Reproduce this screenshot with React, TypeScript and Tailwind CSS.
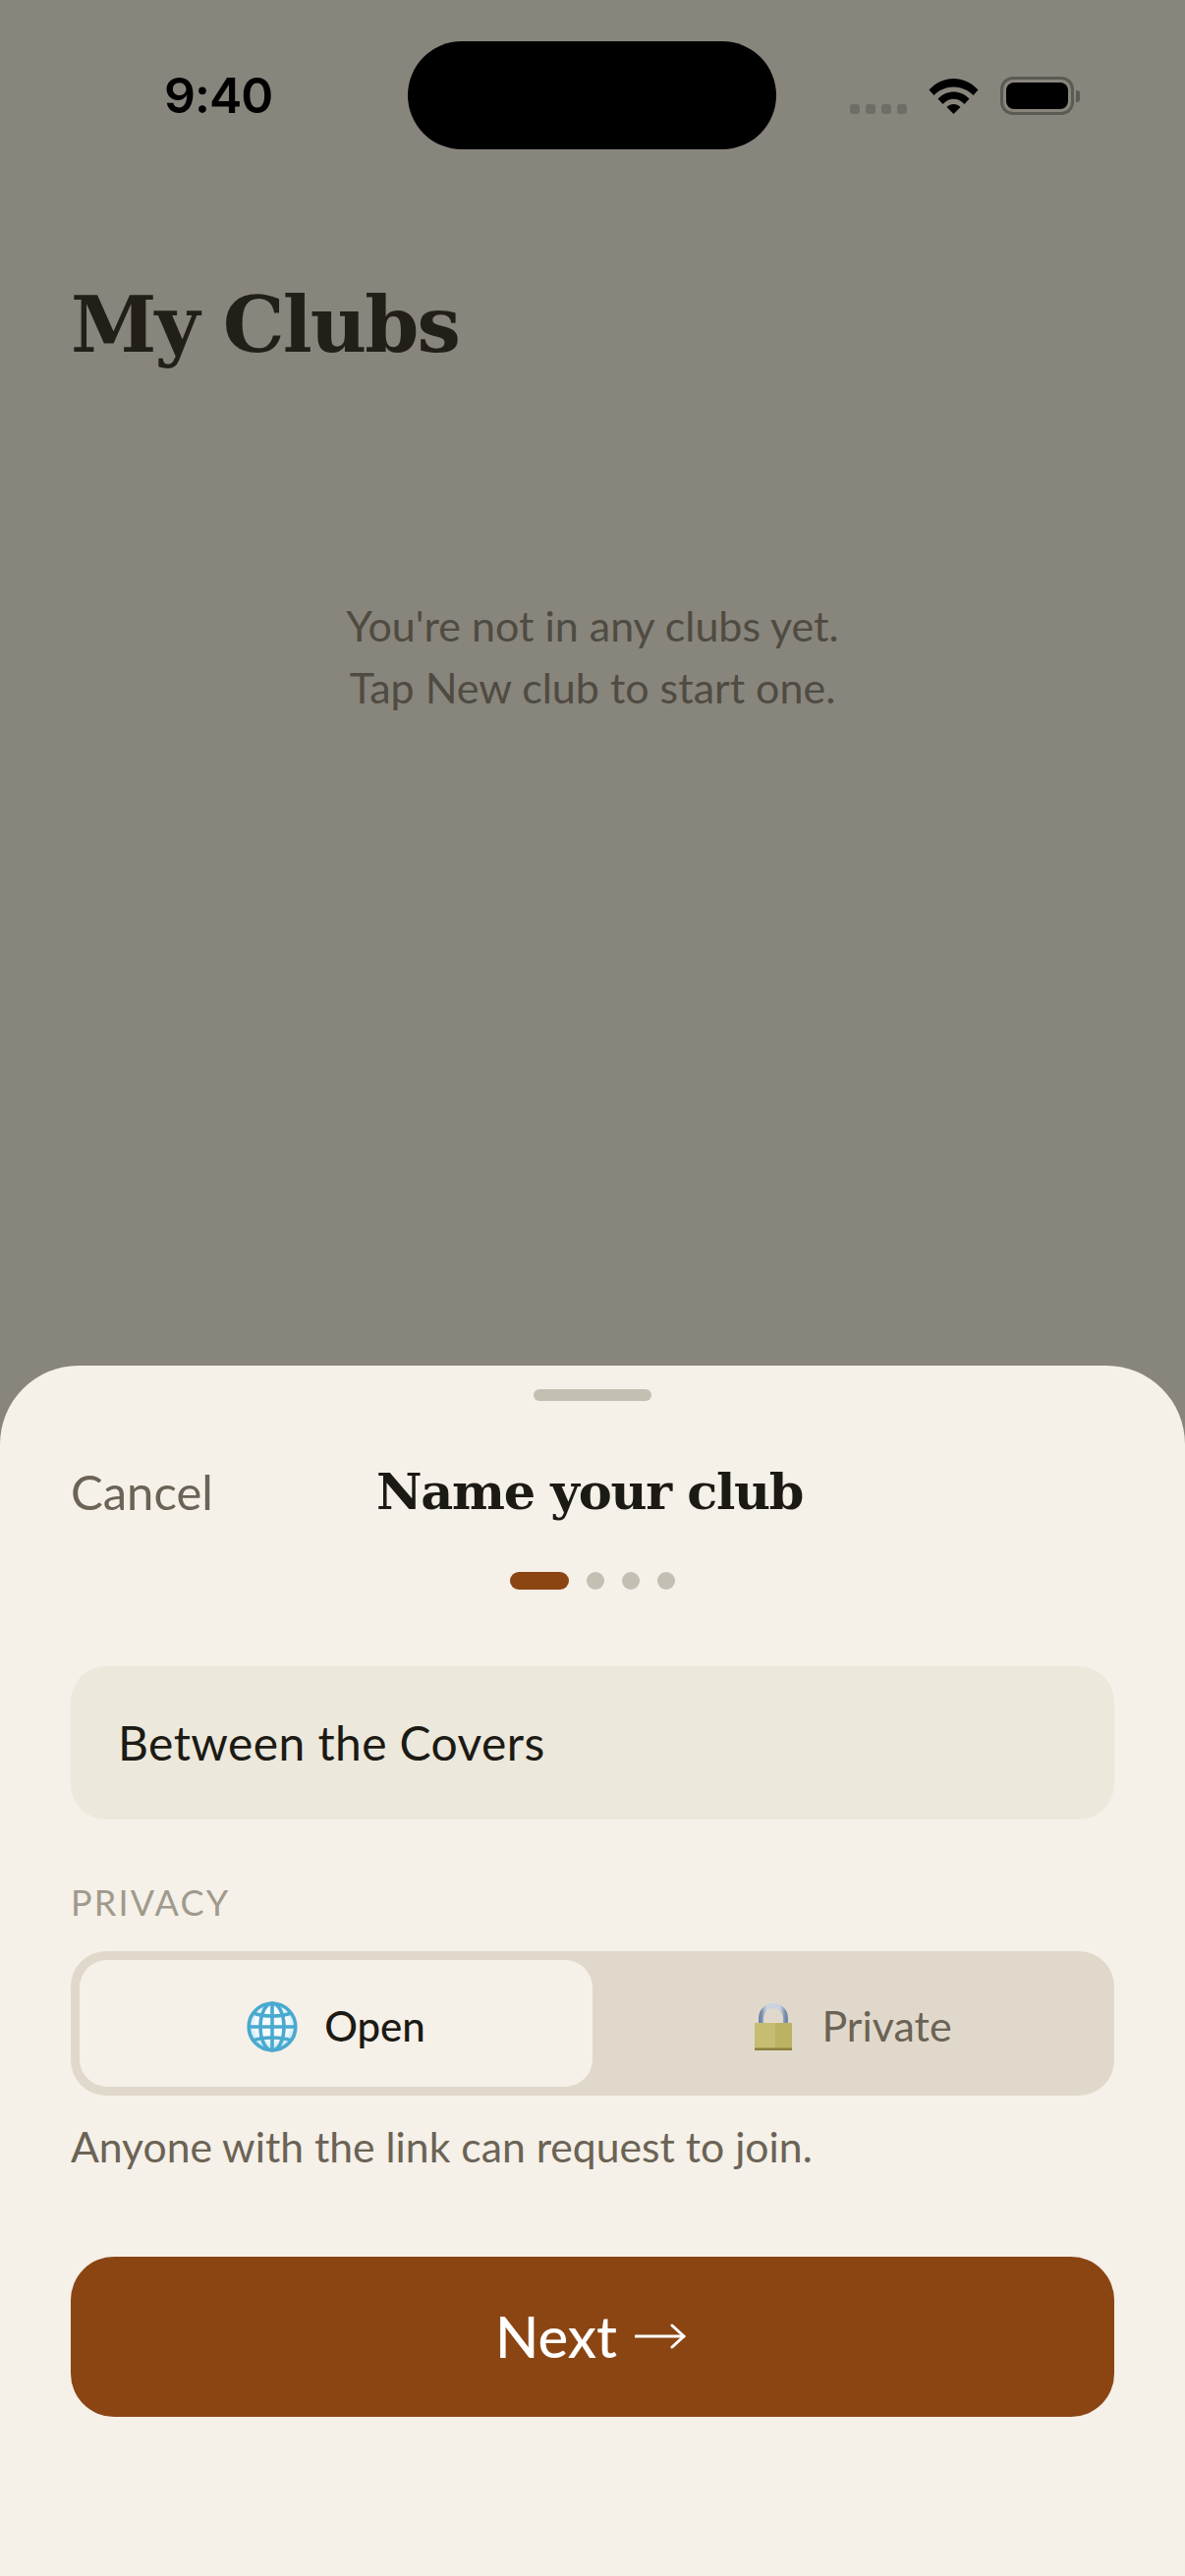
const sans = "font-['Lato','Noto_Sans',sans-serif]";

function Wifi() {
  return (
    <svg width="51" height="37" viewBox="0 0 51 37" className="shrink-0">
      <path d="M0.5 12.5 C14 -3 37 -3 50.5 12.5 L45.5 18 C34.5 6.5 16.5 6.5 5.5 18 Z" fill="#000" />
      <path d="M9.5 21.5 C18.5 12 32.5 12 41.5 21.5 L36.5 27 C30 20 21 20 14.5 27 Z" fill="#000" />
      <path d="M18.5 30 C22.5 26 28.5 26 32.5 30 L25.5 37 Z" fill="#000" />
    </svg>
  );
}

function Battery() {
  return (
    <div className="flex items-center">
      <div className="flex h-[39px] w-[75px] rounded-[13px] border-[3px] border-[#5c5a52] p-[3px]">
        <div className="flex-1 rounded-[8px] bg-black" />
      </div>
      <div className="ml-[2px] h-[12px] w-[4px] rounded-r-[3px] bg-[#5c5a52]" />
    </div>
  );
}

function Globe() {
  return (
    <svg width="52" height="52" viewBox="0 0 52 52" className="shrink-0">
      <defs>
        <radialGradient id="globeFill" cx="0.5" cy="0.45" r="0.55">
          <stop offset="0.6" stopColor="#f6fbfe" />
          <stop offset="1" stopColor="#b9e2f2" />
        </radialGradient>
      </defs>
      <circle cx="26" cy="26" r="24.5" fill="url(#globeFill)" />
      <g fill="none" stroke="#4aa9cf" strokeWidth="3.6">
        <circle cx="26" cy="26" r="23.8" />
        <ellipse cx="26" cy="26" rx="12" ry="24" />
        <path d="M26 2 V50" />
        <path d="M2 26 H50" />
        <path d="M6.5 12 C17 16 35 16 45.5 12" />
        <path d="M6.5 40 C17 36 35 36 45.5 40" />
      </g>
    </svg>
  );
}

function Lock() {
  return (
    <svg width="38" height="48" viewBox="0 0 38 48" className="shrink-0">
      <defs>
        <linearGradient id="shackle" x1="0" y1="0" x2="1" y2="0">
          <stop offset="0" stopColor="#7288a8" />
          <stop offset="0.22" stopColor="#c9d2de" />
          <stop offset="0.78" stopColor="#c9d2de" />
          <stop offset="1" stopColor="#7288a8" />
        </linearGradient>
      </defs>
      <path d="M6.5 21 V15 A12.5 12.5 0 0 1 31.5 15 V21" fill="none" stroke="url(#shackle)" strokeWidth="5" />
      <rect x="0" y="20" width="38" height="28" rx="1" fill="#c7bd72" />
      <rect x="21" y="20" width="17" height="28" fill="#bdb263" />
      <rect x="0" y="45.5" width="38" height="2.5" fill="#8c7f3e" />
    </svg>
  );
}

export default function App() {
  return (
    <div className={`${sans} relative flex h-[2622px] w-[1206px] flex-col overflow-hidden bg-[#88857c]`}>
      <div className="flex h-[1390px] flex-col">
        <div className="flex h-[152px] items-start pl-[167px] pt-[42px]">
          <div className="h-[110px] w-[110px] shrink-0 font-['Inter',sans-serif] text-[50px] font-semibold leading-[110px] tracking-[-1px] text-black">9:40</div>
          <div className="ml-[138px] h-[110px] w-[375px] shrink-0 rounded-[55px] bg-black" />
          <div className="ml-[75px] mt-[36px] flex items-start">
            <div className="mt-[28px] flex w-[80px] gap-[6px]">
              <div className="h-[10px] w-[10px] rounded-[3px] bg-[#6f6d66]" />
              <div className="h-[10px] w-[10px] rounded-[3px] bg-[#6f6d66]" />
              <div className="h-[10px] w-[10px] rounded-[3px] bg-[#6f6d66]" />
              <div className="h-[10px] w-[10px] rounded-[3px] bg-[#6f6d66]" />
            </div>
            <div className="mt-[1px] w-[73px]"><Wifi /></div>
            <Battery />
          </div>
        </div>
        <h1 className="mt-[124px] pl-[72px] font-['DejaVu_Serif',serif] text-[79px] font-bold leading-[110px] tracking-[-2px] text-[#221f18]">My Clubs</h1>
        <div className="mt-[219px] text-center text-[43px] leading-[63px] text-[#4f4b42]">
          <p>You're not in any clubs yet.</p>
          <p>Tap New club to start one.</p>
        </div>
      </div>

      <div className="flex flex-1 flex-col rounded-t-[80px] bg-[#f5f0e8] px-[72px]">
        <div className="mt-[24px] h-[12px] w-[120px] self-center rounded-full bg-[#c4bfb3]" />
        <div className="relative mt-[60px] flex h-[64px] items-center">
          <span className="w-[311px] text-[49px] leading-[62px] text-[#6b6355]">Cancel</span>
          <span className="font-['DejaVu_Serif',serif] text-[51px] font-bold leading-[66px] tracking-[-1.3px] text-[#1c1a14]">Name your club</span>
        </div>
        <div className="mt-[50px] flex items-center justify-center gap-[18px]">
          <div className="h-[18px] w-[60px] rounded-full bg-[#8b4513]" />
          <div className="h-[18px] w-[18px] rounded-full bg-[#c4bfb3]" />
          <div className="h-[18px] w-[18px] rounded-full bg-[#c4bfb3]" />
          <div className="h-[18px] w-[18px] rounded-full bg-[#c4bfb3]" />
        </div>
        <div className="mt-[78px] flex h-[156px] items-center rounded-[36px] bg-[#ece8dc] px-[48px] text-[48px] tracking-[0.4px] text-[#1c1a14]">Between the Covers</div>
        <div className="mt-[62px] text-[36px] uppercase leading-[44px] tracking-[2.2px] text-[#a09a8c]">Privacy</div>
        <div className="mt-[28px] flex h-[147px] rounded-[36px] bg-[#e0d9cb] p-[9px]">
          <div className="flex w-[522px] items-center justify-center gap-[27px] rounded-[28px] bg-[#f5f0e8] pt-[6px]">
            <Globe />
            <span className="text-[42px] font-medium text-[#1c1a14]">Open</span>
          </div>
          <div className="flex flex-1 items-center justify-center gap-[30px] pl-[9px] pt-[6px]">
            <Lock />
            <span className="text-[43px] text-[#6b6355]">Private</span>
          </div>
        </div>
        <p className="mt-[21px] text-[42.7px] leading-[62px] text-[#6b6355]">Anyone with the link can request to join.</p>
        <div className="mt-[81px] flex h-[163px] items-center justify-center gap-[18px] rounded-[44px] bg-[#8b4513] pb-[2px] pr-[4px] text-[58px] font-medium text-white">
          <span>Next</span>
          <svg width="52" height="30" viewBox="0 0 52 30" fill="none" stroke="#fff" strokeWidth="3" strokeLinecap="round" strokeLinejoin="round">
            <path d="M1 15 H50" />
            <path d="M38 4 L50 15 L38 26" />
          </svg>
        </div>
      </div>
    </div>
  );
}
